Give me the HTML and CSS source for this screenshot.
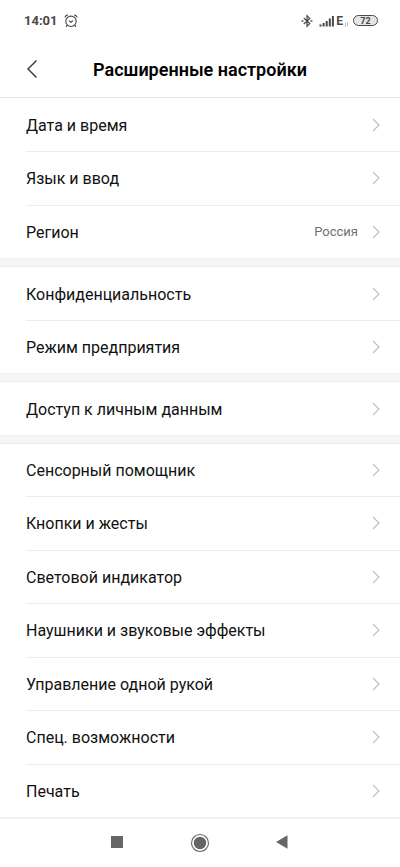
FILE: index.html
```html
<!DOCTYPE html>
<html lang="ru">
<head>
<meta charset="utf-8">
<meta name="viewport" content="width=device-width, initial-scale=1">
<title>Расширенные настройки</title>
<link rel="stylesheet" href="styles.css">
</head>
<body>
<svg class="defs" aria-hidden="true">
  <symbol id="chevron" viewBox="0 0 8 14"><path d="M1 1l6 6-6 6" fill="none" stroke="currentColor" stroke-width="1.1"/></symbol>
</svg>
<div class="status">
  <div class="status-left">
    <span class="clock">14:01</span>
    <svg width="14" height="14" viewBox="0 0 14 14" fill="none" stroke="currentColor" aria-hidden="true"><circle cx="7" cy="7.3" r="5.2" stroke-width="1.1"/><path d="M4.9 6.6L7 8.2l2.1-1.6" stroke-width="1.1"/><path d="M.9 3.4Q1.5 1.5 3.8.9M13.1 3.4Q12.5 1.5 10.2.9M3.3 11.2l-1.2 1.6M10.7 11.2l1.2 1.6" stroke-width="1.2"/></svg>
  </div>
  <div class="status-right">
    <svg class="bluetooth" width="12" height="14" viewBox="0 0 12 14" fill="none" stroke="currentColor" aria-hidden="true"><path d="M2.8 4l6 5.600L6 12.300V1.700l2.800 2.700L2.800 10" stroke-width="1.200"/><path d="M.6 7h1.800M9.600 7h1.800" stroke-width="1.500"/></svg>
    <svg width="16" height="12" viewBox="0 0 16 12" fill="currentColor" aria-hidden="true"><path d="M.5 9.500h2v2h-2zM3.600 8h2v3.500h-2zM6.700 6h2v5.500h-2zM9.800 3.500h2v8h-2zM12.900 1h2v10.500h-2z"/></svg>
    <span class="network">E</span>
    <svg class="traffic" width="5" height="12" viewBox="0 0 5 12" stroke="currentColor" aria-hidden="true"><path d="M1.500 8v4M3.500 7v4" stroke-width=".8"/></svg>
    <span class="battery">72</span>
  </div>
</div>
<header class="header">
  <button class="back" type="button" aria-label="Назад"><svg width="12" height="20" viewBox="0 0 12 20" aria-hidden="true"><path d="M10.500 1.500L2 10l8.500 8.500" fill="none" stroke="currentColor" stroke-width="1.400"/></svg></button>
  <h1>Расширенные настройки</h1>
</header>
<main class="settings">
  <ul class="group rows-3">
    <li><a href="#date"><span class="label">Дата и время</span><svg class="chevron"><use href="#chevron"/></svg></a></li>
    <li><a href="#language"><span class="label">Язык и ввод</span><svg class="chevron"><use href="#chevron"/></svg></a></li>
    <li><a href="#region"><span class="label">Регион</span><span class="value">Россия</span><svg class="chevron"><use href="#chevron"/></svg></a></li>
  </ul>
  <ul class="group rows-2">
    <li><a href="#privacy"><span class="label">Конфиденциальность</span><svg class="chevron"><use href="#chevron"/></svg></a></li>
    <li><a href="#enterprise"><span class="label">Режим предприятия</span><svg class="chevron"><use href="#chevron"/></svg></a></li>
  </ul>
  <ul class="group rows-1">
    <li><a href="#access"><span class="label">Доступ к личным данным</span><svg class="chevron"><use href="#chevron"/></svg></a></li>
  </ul>
  <ul class="group rows-7">
    <li><a href="#touch"><span class="label">Сенсорный помощник</span><svg class="chevron"><use href="#chevron"/></svg></a></li>
    <li><a href="#buttons"><span class="label">Кнопки и жесты</span><svg class="chevron"><use href="#chevron"/></svg></a></li>
    <li><a href="#led"><span class="label">Световой индикатор</span><svg class="chevron"><use href="#chevron"/></svg></a></li>
    <li><a href="#sound"><span class="label">Наушники и звуковые эффекты</span><svg class="chevron"><use href="#chevron"/></svg></a></li>
    <li><a href="#one-hand"><span class="label">Управление одной рукой</span><svg class="chevron"><use href="#chevron"/></svg></a></li>
    <li><a href="#accessibility"><span class="label">Спец. возможности</span><svg class="chevron"><use href="#chevron"/></svg></a></li>
    <li><a href="#print"><span class="label">Печать</span><svg class="chevron"><use href="#chevron"/></svg></a></li>
  </ul>
</main>
<nav class="navbar">
  <button type="button" aria-label="Недавние"><svg width="20" height="20" viewBox="0 0 20 20" fill="currentColor" aria-hidden="true"><path d="M4 3h12v12H4z"/></svg></button>
  <button type="button" aria-label="Домой"><svg width="20" height="20" viewBox="0 0 20 20" fill="currentColor" aria-hidden="true"><circle cx="10" cy="10" r="6.200"/><circle cx="10" cy="10" r="8.500" fill="none" stroke="currentColor" stroke-width="1.100"/></svg></button>
  <button type="button" aria-label="Назад"><svg width="20" height="20" viewBox="0 0 20 20" fill="currentColor" aria-hidden="true"><path d="M14.500 2.300v13.400L3 9z"/></svg></button>
</nav>
</body>
</html>
```
FILE: styles.css
```css
* { box-sizing: border-box; }
body {
  margin: 0;
  min-height: 100vh;
  display: flex;
  flex-direction: column;
  background: #fff;
  color: #111;
  font-family: Roboto, sans-serif;
  font-size: 16px;
  line-height: 20px;
}
svg { flex: none; display: block; }
.defs { position: absolute; width: 0; height: 0; }
button {
  border: 0;
  padding: 0;
  background: none;
  color: inherit;
  display: flex;
  align-items: center;
  justify-content: center;
}
.status {
  height: 41px;
  padding: 0 22px 0 24px;
  display: flex;
  align-items: center;
  justify-content: space-between;
  color: #484848;
}
.status-left, .status-right { display: flex; align-items: center; }
.status-left { gap: 6px; }
.clock { font-size: 13px; font-weight: 700; }
.bluetooth { margin-right: 6px; }
.network { margin-left: 1px; font-size: 12px; font-weight: 700; }
.traffic { margin-left: 1px; color: #aaa; }
.battery {
  width: 25px;
  height: 11px;
  margin-left: 4px;
  border: 1px solid #484848;
  border-radius: 6px;
  background: #e6e6e6;
  font-size: 9px;
  font-weight: 700;
  line-height: 10px;
  text-align: center;
}
.header {
  height: 57px;
  border-bottom: 1px solid #e6e6e6;
  padding: 0 20px;
  display: grid;
  grid-template-columns: 24px 1fr 24px;
  align-items: center;
}
.back { height: 40px; color: #333; }
h1 {
  margin: 0;
  padding-top: 2px;
  color: #000;
  font-size: 18px;
  font-weight: 600;
  line-height: 24px;
  text-align: center;
}
.settings {
  flex: 1;
  display: flex;
  flex-direction: column;
  gap: 8px;
  background: #f6f6f6;
}
.group {
  list-style: none;
  margin: 0;
  padding: 0;
  display: flex;
  flex-direction: column;
  background: #fff;
  box-shadow: 0 1px #f0f0f0;
}
.rows-1 { flex: 1 0 auto; }
.rows-2 { flex: 2 0 auto; }
.rows-3 { flex: 3 0 auto; }
.rows-7 { flex: 7 0 auto; }
.group li { flex: 1 0 auto; min-height: 53px; padding-left: 26px; display: flex; }
.group a {
  flex: 1;
  display: flex;
  align-items: center;
  padding-right: 20px;
  border-top: 1px solid #ececec;
  color: inherit;
  text-decoration: none;
}
.group li:first-child { border-top: 1px solid #ececec; }
.group li:first-child a, .rows-3 li:first-child { border-top: 0; }
.label { padding-top: 2px; }
.chevron { width: 8px; height: 14px; margin-left: auto; color: #bbb; }
.value { margin-left: auto; color: #707070; font-size: 13px; }
.value + .chevron { margin-left: 14px; }
.navbar {
  height: 50px;
  border-top: 2px solid #f2f2f2;
  padding: 0 76px;
  display: flex;
  align-items: center;
  justify-content: space-between;
  color: #666;
}
.navbar button { width: 82px; height: 40px; }
```
